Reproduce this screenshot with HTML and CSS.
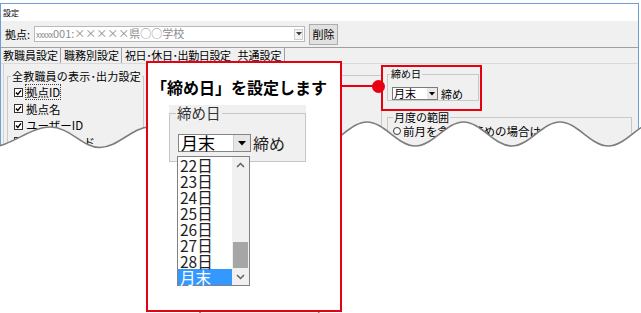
FILE: index.html
```html
<!DOCTYPE html>
<html lang="ja">
<head>
    <meta charset="UTF-8">
    <title>設定</title>
    <link rel="stylesheet" href="styles.css">
</head>
<body>
    <div class="window">
        <div class="titlebar">設定</div>

        <div class="toolbar">
            <span class="field-label">拠点:</span>
            <div class="combo combo-school">
                <span class="combo-text"><span class="tiny">xxxxx</span>001:×××××県○○学校</span>
                <span class="combo-btn"><svg width="6" height="4" viewBox="0 0 6 4"><polygon points="0,0 6,0 3,3.5" fill="#444"/></svg></span>
            </div>
            <div class="button">削除</div>
        </div>

        <div class="tabs">
            <span class="tab first">教職員設定</span>
            <span class="tab">職務別設定</span>
            <span class="tab no-bar">祝日･休日･出勤日設定</span>
            <span class="tab">共通設定</span>
        </div>

        <div class="tab-page">
            <fieldset class="group group-all">
                <legend>全教職員の表示･出力設定</legend>
                <div class="check"><svg class="box" width="9" height="9" viewBox="0 0 9 9"><rect x=".5" y=".5" width="8" height="8" fill="#fff" stroke="#333"/><polyline points="2,4.5 3.8,6.5 7,2.3" fill="none" stroke="#000" stroke-width="1.4"/></svg><span class="focus">拠点ID</span></div>
                <div class="check"><svg class="box" width="9" height="9" viewBox="0 0 9 9"><rect x=".5" y=".5" width="8" height="8" fill="#fff" stroke="#333"/><polyline points="2,4.5 3.8,6.5 7,2.3" fill="none" stroke="#000" stroke-width="1.4"/></svg>拠点名</div>
                <div class="check"><svg class="box" width="9" height="9" viewBox="0 0 9 9"><rect x=".5" y=".5" width="8" height="8" fill="#fff" stroke="#333"/><polyline points="2,4.5 3.8,6.5 7,2.3" fill="none" stroke="#000" stroke-width="1.4"/></svg>ユーザーID</div>
                <div class="check"><svg class="box" width="9" height="9" viewBox="0 0 9 9"><rect x=".5" y=".5" width="8" height="8" fill="#fff" stroke="#333"/><polyline points="2,4.5 3.8,6.5 7,2.3" fill="none" stroke="#000" stroke-width="1.4"/></svg>ダウンロード</div>
            </fieldset>

            <div class="group group-mid"></div>

            <div class="right-col">
                <fieldset class="group group-close">
                    <legend>締め日</legend>
                    <div class="close-row">
                        <div class="combo combo-small">
                            <span class="combo-text">月末</span>
                            <span class="combo-btn"><svg width="6" height="4" viewBox="0 0 6 4"><polygon points="0,0 6,0 3,3.5" fill="#000"/></svg></span>
                        </div>
                        <span class="close-label">締め</span>
                    </div>
                </fieldset>
                <fieldset class="group group-range">
                    <legend>月度の範囲</legend>
                    <div class="radio-row"><span class="radio"></span>前月を含む月締めの場合は、前月</div>
                </fieldset>
            </div>
        </div>
    </div>

    <!-- torn edge of the screenshot -->
    <svg class="cut-edge" width="641" height="313" viewBox="0 0 641 313">
        <path d="M -12 147.5 C 10 147.5 30 127 50 127 S 82 147.5 100 147.5 S 132 127 150 127 S 182 147.5 200 147.5 L 200 320 L -12 320 Z" fill="#fff" stroke="#7d7d7d" stroke-width="1.6"/>
        <path d="M 318.75 146 C 336.1 146 349.6 122 367 122 S 397.9 146 415.25 146 S 446.1 122 463.5 122 S 494.4 146 511.75 146 S 542.6 122 560 122 S 590.9 146 608.25 146 S 639.1 122 656.5 122 L 656.5 320 L 318.75 320 Z" fill="#fff" stroke="#7d7d7d" stroke-width="1.6"/>
    </svg>

    <div class="callout">
        <p class="callout-title">「締め日」を設定します</p>
        <div class="zoom-group">
            <fieldset class="zoom-frame">
                <legend>締め日</legend>
                <div class="zoom-row">
                    <div class="zoom-combo">
                        <span class="zoom-value">月末</span>
                        <span class="zoom-btn"><svg width="8" height="5" viewBox="0 0 8 5"><polygon points="0,0 8,0 4,4.5" fill="#000"/></svg></span>
                    </div>
                    <span class="zoom-label">締め</span>
                </div>
            </fieldset>
        </div>

        <div class="dropdown">
            <div class="dropdown-items">
                <div class="item">22日</div>
                <div class="item">23日</div>
                <div class="item">24日</div>
                <div class="item">25日</div>
                <div class="item">26日</div>
                <div class="item">27日</div>
                <div class="item">28日</div>
                <div class="item selected">月末</div>
            </div>
            <div class="scrollbar">
                <div class="sb-arrow"><svg width="9" height="6" viewBox="0 0 9 6"><polyline points="1,5 4.5,1.5 8,5" fill="none" stroke="#606060" stroke-width="1.5"/></svg></div>
                <div class="sb-track"><div class="sb-thumb"></div></div>
                <div class="sb-arrow"><svg width="9" height="6" viewBox="0 0 9 6"><polyline points="1,1 4.5,4.5 8,1" fill="none" stroke="#606060" stroke-width="1.5"/></svg></div>
            </div>
        </div>
    </div>

    <div class="leader"></div>
    <div class="leader-dot"></div>
    <div class="highlight"></div>
</body>
</html>
```

FILE: styles.css
```css
* {
    box-sizing: border-box;
}
body {
    margin: 0;
    width: 641px;
    height: 313px;
    overflow: hidden;
    position: relative;
    background-color: #fff;
    color: #000;
    font-family: "Noto Sans CJK JP", "Noto Sans", sans-serif;
}

/* ---- dialog window ---- */
.window {
    width: 639px;
    height: 310px;
    margin-top: 3px;
    border: 1px solid #6d9fd6;
    border-bottom: none;
    background-color: #f0f0f0;
}
.titlebar {
    height: 17px;
    background-color: #fff;
    font-size: 8px;
    line-height: 17px;
    padding-left: 2px;
}
.toolbar {
    height: 27px;
    display: flex;
    align-items: center;
    padding-left: 4px;
    border-bottom: 1px solid #a0a0a0;
    font-size: 11px;
}
.field-label {
    width: 29px;
    line-height: 14px;
}
.combo {
    display: flex;
    align-items: center;
    background-color: #fff;
}
.combo-school {
    width: 271px;
    height: 16px;
    border: 1px solid #b9b9b9;
}
.combo-school .combo-text {
    flex: 1;
    padding-left: 1px;
    font-size: 11px;
    line-height: 14px;
    color: #8c8c8c;
    white-space: nowrap;
}
.tiny {
    font-size: 8px;
    letter-spacing: -0.6px;
}
.combo-school .combo-btn {
    width: 9px;
    height: 11px;
    margin-right: 1px;
    border: 1px solid #cfcfcf;
    background-color: #f4f4f4;
    display: flex;
    align-items: center;
    justify-content: center;
}
.button {
    width: 29px;
    height: 21px;
    margin-left: 4px;
    border: 1px solid #adadad;
    background-color: #e1e1e1;
    font-size: 11px;
    line-height: 19px;
    text-align: center;
}
.tabs {
    height: 16px;
    display: flex;
    border-bottom: 1px solid #d9d9d9;
    font-size: 11px;
    line-height: 15px;
    white-space: nowrap;
}
.tab {
    padding: 0 2px 0 3px;
    border-right: 1px solid #a0a0a0;
}
.tab.first {
    padding-left: 2px;
}
.tab.no-bar {
    border-right: none;
    padding-right: 4px;
    letter-spacing: -0.4px;
}
.tab-page {
    height: 250px;
    margin-left: 2px;
    border-left: 1px solid #d4d4d4;
    display: flex;
    align-items: flex-start;
}

/* ---- group boxes ---- */
.group {
    margin: 0;
    padding: 0;
    min-width: 0;
    border: 1px solid #c9c9c9;
}
.group legend {
    padding: 0 1px;
    font-size: 11px;
    line-height: 12px;
    white-space: nowrap;
}
.group-all {
    width: 137px;
    height: 120px;
    margin: 6px 0 0 3px;
    padding: 2px 0 0 3px;
}
.group-all legend {
    font-size: 11px;
    letter-spacing: 0.2px;
}
.check {
    height: 16.5px;
    display: flex;
    align-items: center;
    margin-left: 3px;
    font-size: 11.5px;
    line-height: 14px;
    white-space: nowrap;
}
.check .box {
    margin-right: 3px;
    flex: none;
}
.focus {
    outline: 1px dotted #444;
}
.group-mid {
    width: 232px;
    height: 200px;
    margin: 11px 0 0 6px;
}
.right-col {
    margin-left: 5px;
    display: flex;
    flex-direction: column;
}
.group-close {
    width: 92px;
    margin-top: 4px;
    padding: 7px 0 0 4px;
}
.group-close legend {
    font-size: 10px;
    margin-left: -2px;
}
.close-row {
    display: flex;
    align-items: center;
    height: 13px;
}
.combo-small {
    width: 46px;
    height: 13px;
    border: 1px solid #7a7a7a;
}
.combo-small .combo-text {
    flex: 1;
    padding-left: 1px;
    font-size: 11px;
    line-height: 11px;
}
.combo-small .combo-btn {
    width: 10px;
    height: 11px;
    background-color: #e8e8e8;
    display: flex;
    align-items: center;
    justify-content: center;
}
.close-label {
    margin-left: 3px;
    font-size: 11px;
    line-height: 12px;
}
.group-range {
    width: 245px;
    height: 120px;
    margin-top: 10px;
    padding: 1px 0 0 5px;
}
.radio-row {
    display: flex;
    align-items: center;
    height: 14px;
    font-size: 11.5px;
    white-space: nowrap;
}
.radio {
    width: 8px;
    height: 8px;
    border: 1px solid #333;
    border-radius: 50%;
    background-color: #fff;
    margin-right: 2px;
}

/* ---- torn edge ---- */
.cut-edge {
    position: absolute;
    left: 0;
    top: 0;
}

/* ---- callout ---- */
.callout {
    position: absolute;
    left: 146px;
    top: 61px;
    width: 196px;
    height: 251px;
    border: 2px solid #e60012;
    background-color: #fff;
}
.callout-title {
    margin: 16px 0 0 3px;
    font-size: 16px;
    font-weight: 700;
    line-height: 16px;
    white-space: nowrap;
}
.zoom-group {
    width: 137px;
    margin: 10px 0 0 21px;
    background-color: #f0f0f0;
}
.zoom-frame {
    margin: 0;
    padding: 0 0 9px 8px;
    min-width: 0;
    border: 1px solid #c6c6c6;
}
.zoom-frame legend {
    margin-left: -2px;
    padding: 0 1px;
    font-size: 14.5px;
    line-height: 16px;
    color: #333;
}
.zoom-row {
    display: flex;
    align-items: center;
    padding-top: 13px;
}
.zoom-combo {
    width: 73px;
    height: 18px;
    display: flex;
    border: 1px solid #858585;
    background-color: #fff;
}
.zoom-value {
    flex: 1;
    padding-left: 2px;
    font-size: 17px;
    line-height: 16px;
}
.zoom-btn {
    width: 17px;
    background-color: #e6e6e6;
    border-left: 1px solid #cfcfcf;
    display: flex;
    align-items: center;
    justify-content: center;
}
.zoom-label {
    margin-left: 2px;
    font-size: 16px;
    line-height: 16px;
    color: #222;
}
.dropdown {
    position: absolute;
    left: 29px;
    top: 93px;
    width: 73px;
    height: 130px;
    display: flex;
    border: 1px solid #828282;
    background-color: #fff;
}
.dropdown-items {
    width: 54px;
}
.item {
    height: 16px;
    padding-left: 2px;
    font-size: 15.5px;
    line-height: 16px;
    color: #222;
}
.item.selected {
    background-color: #3399ff;
    color: #fff;
}
.scrollbar {
    width: 17px;
    display: flex;
    flex-direction: column;
    background-color: #f0f0f0;
}
.sb-arrow {
    height: 16px;
    display: flex;
    align-items: center;
    justify-content: center;
}
.sb-track {
    flex: 1;
    padding-top: 69px;
}
.sb-thumb {
    height: 26px;
    margin: 0 1px;
    background-color: #a6a6a6;
}

/* ---- pointer to the original control ---- */
.leader {
    position: absolute;
    left: 342px;
    top: 85px;
    width: 34px;
    height: 2px;
    background-color: #e60012;
}
.leader-dot {
    position: absolute;
    left: 372px;
    top: 80px;
    width: 13px;
    height: 13px;
    border-radius: 50%;
    background-color: #e60012;
}
.highlight {
    position: absolute;
    left: 381px;
    top: 65px;
    width: 101px;
    height: 46px;
    border: 2px solid #e60012;
}
```
